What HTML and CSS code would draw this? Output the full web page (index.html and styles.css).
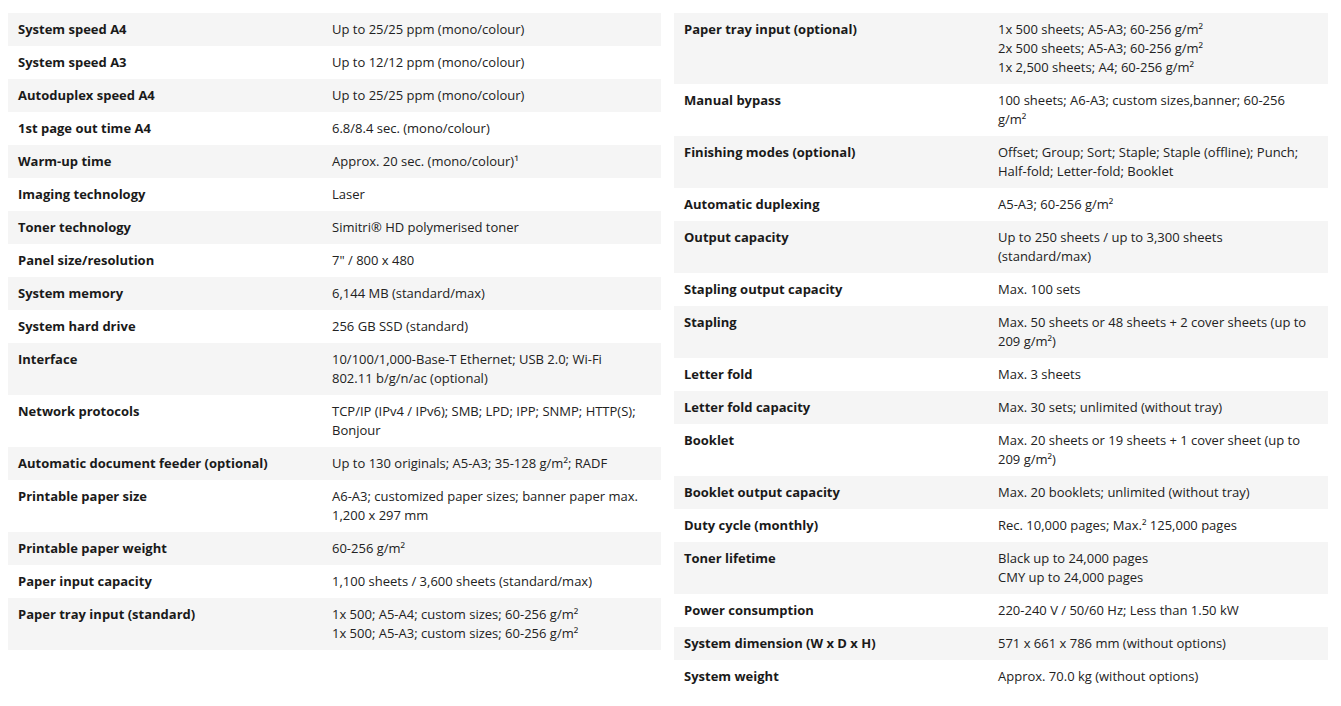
FILE: index.html
```html
<!DOCTYPE html>
<html lang="en">
<head>
<meta charset="utf-8">
<title>Specifications</title>
<link rel="stylesheet" href="styles.css">
</head>
<body>
<div class="specs">
  <table class="spec-table">
    <tbody>
      <tr><th>System speed A4</th><td>Up to 25/25 ppm (mono/colour)</td></tr>
      <tr><th>System speed A3</th><td>Up to 12/12 ppm (mono/colour)</td></tr>
      <tr><th>Autoduplex speed A4</th><td>Up to 25/25 ppm (mono/colour)</td></tr>
      <tr><th>1st page out time A4</th><td>6.8/8.4 sec. (mono/colour)</td></tr>
      <tr><th>Warm-up time</th><td>Approx. 20 sec. (mono/colour)¹</td></tr>
      <tr><th>Imaging technology</th><td>Laser</td></tr>
      <tr><th>Toner technology</th><td>Simitri® HD polymerised toner</td></tr>
      <tr><th>Panel size/resolution</th><td>7" / 800 x 480</td></tr>
      <tr><th>System memory</th><td>6,144 MB (standard/max)</td></tr>
      <tr><th>System hard drive</th><td>256 GB SSD (standard)</td></tr>
      <tr><th>Interface</th><td>10/100/1,000-Base-T Ethernet; USB 2.0; Wi-Fi 802.11 b/g/n/ac (optional)</td></tr>
      <tr><th>Network protocols</th><td>TCP/IP (IPv4 / IPv6); SMB; LPD; IPP; SNMP; HTTP(S); Bonjour</td></tr>
      <tr><th>Automatic document feeder (optional)</th><td>Up to 130 originals; A5-A3; 35-128 g/m²; RADF</td></tr>
      <tr><th>Printable paper size</th><td>A6-A3; customized paper sizes; banner paper max. 1,200 x 297 mm</td></tr>
      <tr><th>Printable paper weight</th><td>60-256 g/m²</td></tr>
      <tr><th>Paper input capacity</th><td>1,100 sheets / 3,600 sheets (standard/max)</td></tr>
      <tr><th>Paper tray input (standard)</th><td>1x 500; A5-A4; custom sizes; 60-256 g/m²<br>1x 500; A5-A3; custom sizes; 60-256 g/m²</td></tr>
    </tbody>
  </table>
  <table class="spec-table">
    <tbody>
      <tr><th>Paper tray input (optional)</th><td>1x 500 sheets; A5-A3; 60-256 g/m²<br>2x 500 sheets; A5-A3; 60-256 g/m²<br>1x 2,500 sheets; A4; 60-256 g/m²</td></tr>
      <tr><th>Manual bypass</th><td>100 sheets; A6-A3; custom sizes,banner; 60-256 g/m²</td></tr>
      <tr><th>Finishing modes (optional)</th><td>Offset; Group; Sort; Staple; Staple (offline); Punch; Half-fold; Letter-fold; Booklet</td></tr>
      <tr><th>Automatic duplexing</th><td>A5-A3; 60-256 g/m²</td></tr>
      <tr><th>Output capacity</th><td>Up to 250 sheets / up to 3,300 sheets (standard/max)</td></tr>
      <tr><th>Stapling output capacity</th><td>Max. 100 sets</td></tr>
      <tr><th>Stapling</th><td>Max. 50 sheets or 48 sheets + 2 cover sheets (up to 209 g/m²)</td></tr>
      <tr><th>Letter fold</th><td>Max. 3 sheets</td></tr>
      <tr><th>Letter fold capacity</th><td>Max. 30 sets; unlimited (without tray)</td></tr>
      <tr><th>Booklet</th><td>Max. 20 sheets or 19 sheets + 1 cover sheet (up to 209 g/m²)</td></tr>
      <tr><th>Booklet output capacity</th><td>Max. 20 booklets; unlimited (without tray)</td></tr>
      <tr><th>Duty cycle (monthly)</th><td>Rec. 10,000 pages; Max.² 125,000 pages</td></tr>
      <tr><th>Toner lifetime</th><td>Black up to 24,000 pages<br>CMY up to 24,000 pages</td></tr>
      <tr><th>Power consumption</th><td>220-240 V / 50/60 Hz; Less than 1.50 kW</td></tr>
      <tr><th>System dimension (W x D x H)</th><td>571 x 661 x 786 mm (without options)</td></tr>
      <tr><th>System weight</th><td>Approx. 70.0 kg (without options)</td></tr>
    </tbody>
  </table>
</div>
</body>
</html>
```
FILE: styles.css
```css
html, body {
  margin: 0;
  padding: 0;
  background: #ffffff;
}

body {
  font-family: "Open Sans", "Liberation Sans", sans-serif;
  font-size: 13px;
  line-height: 19px;
  color: #222222;
}

.specs {
  display: grid;
  grid-template-columns: 653px 654px;
  column-gap: 13px;
  align-items: start;
  padding: 13px 0 0 8px;
}

.spec-table {
  width: 100%;
  border-collapse: collapse;
  table-layout: fixed;
}

.spec-table th,
.spec-table td {
  padding: 7px 18px 7px 10px;
  vertical-align: top;
  text-align: left;
}

.spec-table th {
  width: 286px;
  font-weight: 700;
  color: #1a1a1a;
}

.spec-table td {
  font-weight: 400;
  color: #222222;
}

.spec-table tr:nth-child(odd) {
  background: #f5f5f5;
}
```
